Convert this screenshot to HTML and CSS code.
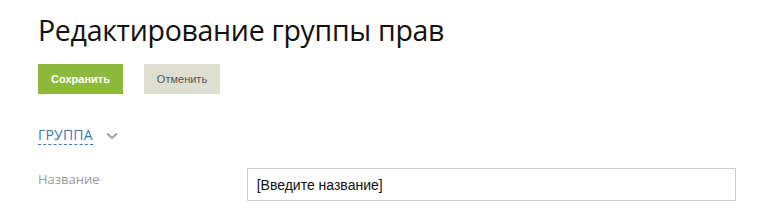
FILE: index.html
```html
<html>
<head>
<meta charset="utf-8">
<link rel="stylesheet" href="styles.css">
</head>
<body>
<div class="page">
<h1 class="title">Редактирование группы прав</h1>

<div class="actions">
<button class="btn btn-save">Сохранить</button>
<button class="btn btn-cancel">Отменить</button>
</div>

<div class="section">
<span class="section-name">ГРУППА</span>
<svg class="chevron" width="12" height="8" viewBox="0 0 12 8"><path d="M1 1.5 L6 6 L11 1.5" fill="none" stroke="#a0a0a0" stroke-width="2"/></svg>
</div>

<div class="field">
<div class="field-label">Название</div>
<input class="field-input" type="text" value="[Введите название]">
</div>
</div>
</body>
</html>
```

FILE: styles.css
```css
* {
    box-sizing: border-box;
}

body {
    margin: 0;
    background: #fff;
    font-family: "Open Sans", "Noto Sans", sans-serif;
}

.page {
    padding: 10px 24px 0 38px;
}

.title {
    margin: 0;
    font-weight: normal;
    font-size: 28.5px;
    line-height: 40px;
    color: #111;
    letter-spacing: -0.3px;
}

.actions {
    display: flex;
    gap: 21px;
    margin-top: 14px;
}

.btn {
    height: 30px;
    border: none;
    font-family: "Liberation Sans", Arial, sans-serif;
    font-size: 11px;
    padding: 0;
}

.btn-save {
    width: 85px;
    background: #8dba3d;
    color: #fff;
    font-weight: bold;
}

.btn-cancel {
    width: 76px;
    background: #dfdfd1;
    color: #555;
}

.section {
    display: flex;
    align-items: center;
    gap: 13px;
    margin-top: 30px;
    height: 22px;
}

.section-name {
    font-size: 14px;
    color: #3b78b8;
    border-bottom: 1px dashed #3b78b8;
    line-height: 18px;
    letter-spacing: 0.2px;
}

.chevron {
    margin-top: 2px;
}

.field {
    display: flex;
    align-items: flex-start;
    margin-top: 22px;
}

.field-label {
    width: 209px;
    font-size: 13px;
    color: #999;
    padding-top: 2px;
}

.field-input {
    width: 490px;
    height: 33px;
    border: 1px solid #ccc;
    padding: 0 9px;
    font-family: "Liberation Sans", Arial, sans-serif;
    font-size: 14px;
    color: #111;
    outline: none;
}
```
